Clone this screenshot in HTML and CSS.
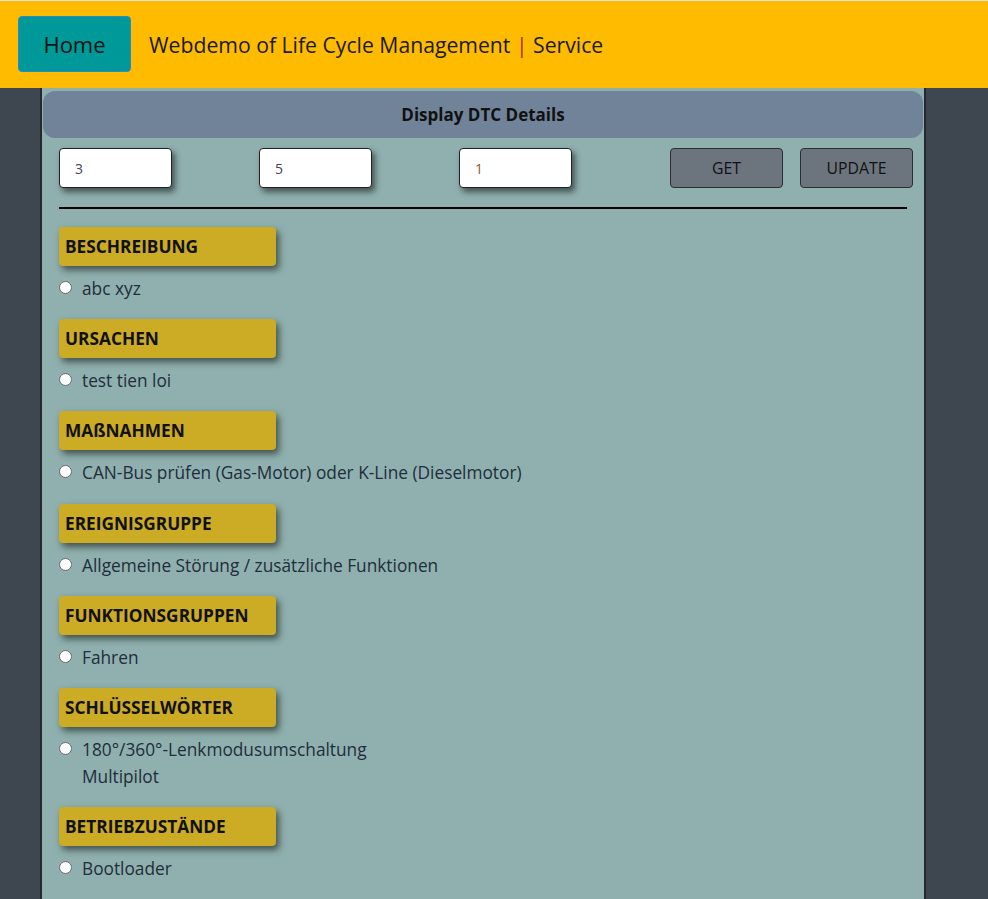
FILE: index.html
```html
<!DOCTYPE html>
<html>
<head>
<meta charset="utf-8">
<link rel="stylesheet" href="styles.css">
</head>
<body>
<header class="topbar">
  <button class="home-btn">Home</button>
  <div class="title">Webdemo of Life Cycle Management <span class="pipe">|</span> Service</div>
</header>
<main class="page">
  <div class="panel">
    <div class="panel-head">Display DTC Details</div>
    <div class="controls">
      <input class="num" type="text" value="3">
      <input class="num" type="text" value="5">
      <input class="num num-orange" type="text" value="1">
      <div class="spacer"></div>
      <button class="btn">GET</button>
      <button class="btn">UPDATE</button>
    </div>
    <hr class="rule">
    <section class="group">
      <div class="label">BESCHREIBUNG</div>
      <ul class="items"><li><span class="radio"></span><span>abc xyz</span></li></ul>
    </section>
    <section class="group">
      <div class="label">URSACHEN</div>
      <ul class="items"><li><span class="radio"></span><span>test tien loi</span></li></ul>
    </section>
    <section class="group">
      <div class="label">MAßNAHMEN</div>
      <ul class="items"><li><span class="radio"></span><span>CAN-Bus prüfen (Gas-Motor) oder K-Line (Dieselmotor)</span></li></ul>
    </section>
    <section class="group">
      <div class="label">EREIGNISGRUPPE</div>
      <ul class="items"><li><span class="radio"></span><span>Allgemeine Störung / zusätzliche Funktionen</span></li></ul>
    </section>
    <section class="group">
      <div class="label">FUNKTIONSGRUPPEN</div>
      <ul class="items"><li><span class="radio"></span><span>Fahren</span></li></ul>
    </section>
    <section class="group">
      <div class="label">SCHLÜSSELWÖRTER</div>
      <ul class="items"><li><span class="radio"></span><span>180°/360°-Lenkmodusumschaltung<br>Multipilot</span></li></ul>
    </section>
    <section class="group">
      <div class="label">BETRIEBZUSTÄNDE</div>
      <ul class="items"><li><span class="radio"></span><span>Bootloader</span></li></ul>
    </section>
  </div>
</main>
</body>
</html>
```
FILE: styles.css
```css
html, body {
  margin: 0;
  padding: 0;
}
body {
  background: #3e464f;
  font-family: "Open Sans", "Noto Sans", sans-serif;
  border-top: 1px solid #e0e0e0;
  height: 898px;
  overflow: hidden;
}
.topbar {
  background: #ffbb00;
  height: 87px;
  display: flex;
  align-items: center;
  padding-left: 18px;
  box-sizing: border-box;
}
.home-btn {
  width: 113px;
  height: 56px;
  background: #009999;
  border: 1px solid #2f86c8;
  border-radius: 4px;
  font-family: inherit;
  font-size: 22px;
  color: #111;
  margin-top: -1px;
  padding: 0;
}
.title {
  margin-left: 18px;
  font-size: 21.2px;
  color: #1a1a1a;
}
.pipe { color: #a63000; }
.page {
  display: flex;
  padding-left: 40px;
}
.panel {
  width: 880px;
  background: #8fb0ae;
  border-left: 2px solid #24292e;
  border-right: 2px solid #24292e;
  padding: 3px 1px 20px 1px;
  min-height: 820px;
}
.panel-head {
  background: #708399;
  height: 47px;
  border-radius: 12px;
  display: flex;
  align-items: center;
  justify-content: center;
  font-weight: bold;
  font-size: 17px;
  color: #111;
}
.controls {
  display: flex;
  align-items: center;
  padding: 10px 10px 0 16px;
}
.num {
  width: 113px;
  height: 40px;
  box-sizing: border-box;
  background: #fff;
  border: 1px solid #222;
  border-radius: 4px;
  box-shadow: 3px 4px 6px rgba(0,0,0,0.55);
  padding: 0 15px;
  font-family: inherit;
  font-size: 14px;
  color: #445;
  margin-right: 87px;
}
.num-orange { color: #8a5a2a; }
.num:nth-of-type(3) { margin-right: 0; }
.spacer { flex: 1; }
.btn {
  width: 113px;
  height: 40px;
  background: #6c757d;
  border: 1px solid #2b2f33;
  border-radius: 4px;
  font-family: inherit;
  font-size: 15.8px;
  color: #111;
  margin-left: 17px;
  padding: 0;
}
.btn:first-of-type { margin-left: 0; margin-right: 17px; }
.btn:last-of-type { margin-left: 0; }
.rule {
  border: 0;
  border-top: 2px solid #000;
  margin: 19px 16px 18px 16px;
}
.group {
  padding-left: 16px;
  margin-bottom: 17.2px;
}
.label {
  width: 217px;
  height: 39px;
  box-sizing: border-box;
  background: #ccab25;
  border-radius: 4px;
  box-shadow: 3px 4px 7px rgba(0,0,0,0.55);
  font-weight: bold;
  font-size: 17.3px;
  color: #111;
  display: flex;
  align-items: center;
  padding-left: 6px;
}
.items {
  list-style: none;
  margin: 9px 0 0 0;
  padding: 0;
}
.items li {
  display: flex;
  align-items: flex-start;
  font-size: 17.3px;
  line-height: 27px;
  color: #1f2d3c;
}
.radio {
  width: 11px;
  height: 11px;
  border-radius: 50%;
  background: #fff;
  border: 1px solid #6a6a6a;
  margin: 6px 10px 0 0;
  flex: none;
}
```
